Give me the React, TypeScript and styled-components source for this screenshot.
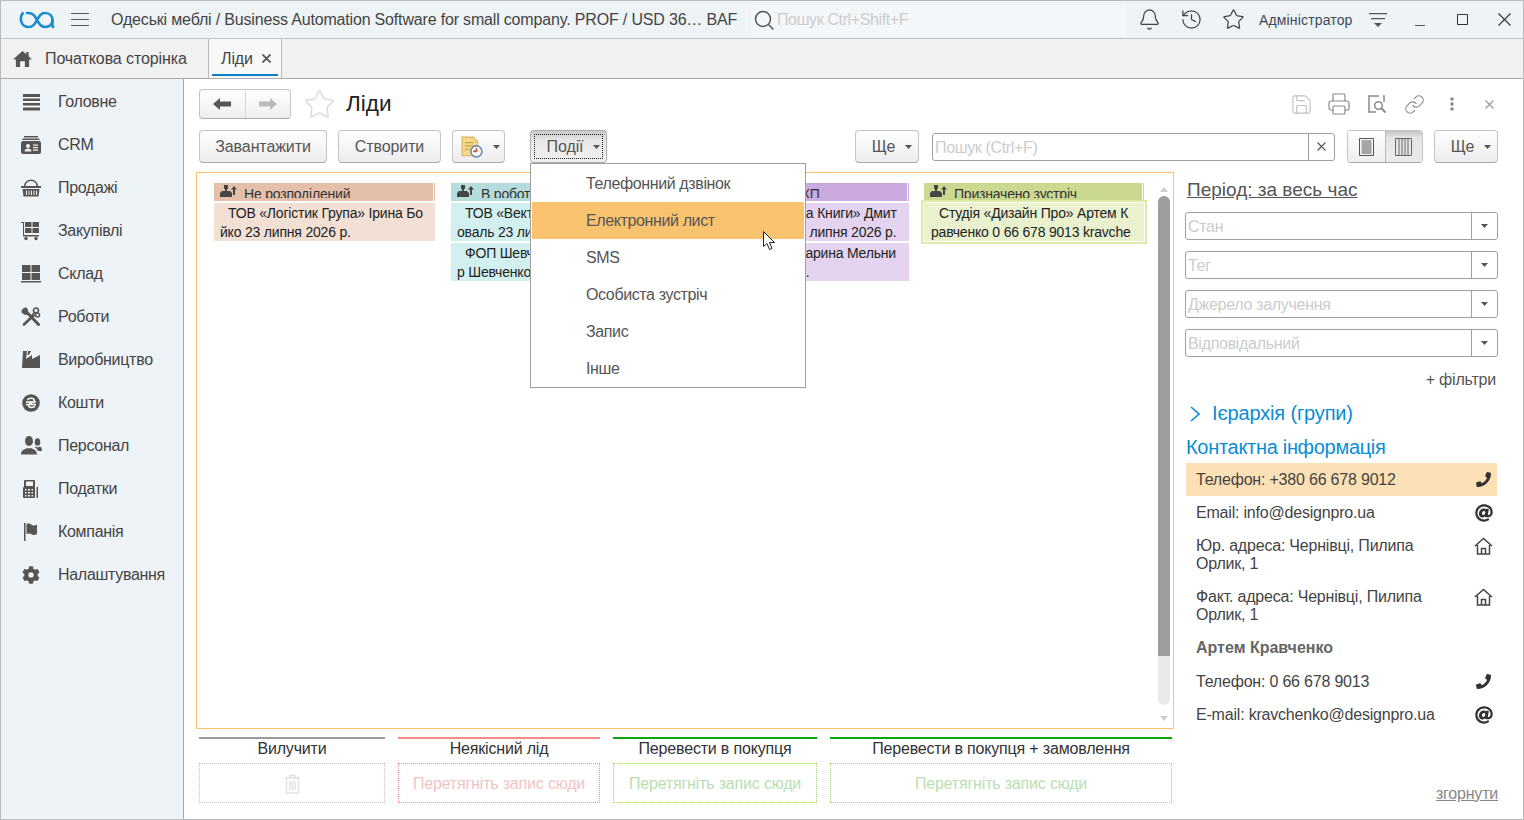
import React from "react";
import styled, { createGlobalStyle } from "styled-components";
import { Bell, History, Star, Printer, Link, Save } from "lucide-react";
import { FaPhoneAlt, FaAt, FaCog } from "react-icons/fa";

const GlobalStyle = createGlobalStyle`
  html, body { margin: 0; padding: 0; background: #fff; }
  body { font-family: "Liberation Sans", Arial, sans-serif; font-size: 16px; color: #444; overflow: hidden; }
  * { box-sizing: border-box; }
`;

const Caret = () => (
  <svg width="7" height="4" viewBox="0 0 7 4"><path d="M0 0h7L3.500 4z" fill="#555" /></svg>
);

const Logo = () => (
  <svg width="36" height="20" viewBox="0 0 36 20" fill="none" stroke="#1a8ccf" strokeWidth="2.600">
    <path d="M4.500 2.500C.5 6 .5 17 9.500 17c5 0 6.500-3.500 8.500-7 2-3.500 3.500-7 8-7 5 0 7.500 3.500 7.500 7s-2.500 7-7.500 7c-4.500 0-6-3.500-8-7-2-3.500-3.500-7-8.500-7H7" />
    <path d="M33.500 9v7.500l1.500 1" />
  </svg>
);

const HomeIcon = () => (
  <svg width="19" height="17" viewBox="0 0 20 18" fill="#555">
    <path d="M10 1l4 3.500V2h2.500v4.700L20 10h-3v8h-4.500v-6h-5v6H3v-8H0z" />
  </svg>
);

const CrmIcon = () => (
  <svg width="20" height="20" viewBox="0 0 20 20" fill="#555">
    <path d="M3 1h14v1.500H3zM1.500 3.500h17V5h-17z" />
    <path fillRule="evenodd" d="M2 6h16a2 2 0 0 1 2 2v9a2 2 0 0 1-2 2H2a2 2 0 0 1-2-2V8a2 2 0 0 1 2-2zm5 3a2 2 0 1 0 0 4 2 2 0 0 0 0-4zm-3.500 7.500h7c0-2-1.500-3-3.500-3s-3.500 1-3.500 3zM12 9.500v1.300h5V9.500zm0 2.500v1.300h5V12zm0 2.500v1.300h5v-1.300z" />
  </svg>
);

const BasketIcon = () => (
  <svg width="20" height="18" viewBox="0 0 20 18" fill="#555">
    <path d="M3 7a7 6.500 0 0 1 14 0h-1.500a5.500 5 0 0 0-11 0z" />
    <path d="M0 7h20v2H0z" />
    <path fillRule="evenodd" d="M1.500 10h17l-1 7.500h-15zM5 11.500v4.500h1v-4.500zm2.500 0v4.500h1v-4.500zm2.500 0v4.500h1v-4.500zm2.500 0v4.500h1v-4.500zm2.500 0v4.500h1v-4.500z" />
  </svg>
);

const CartIcon = () => (
  <svg width="20" height="20" viewBox="0 0 20 20" fill="#555">
    <path d="M0 1h3v13H2V2H0zM4 1h6.500v5H4zM11.500 1H18v5h-6.500zM4 7h6.500v5H4zM11.500 7H18v5h-6.500zM2 14h16v1.500H2z" />
    <circle cx="5" cy="17.500" r="1.700" /><circle cx="15" cy="17.500" r="1.700" />
  </svg>
);

const StockIcon = () => (
  <svg width="20" height="20" viewBox="0 0 20 20" fill="#555">
    <path d="M1 1h8.500v7H1zM10.500 1H19v7h-8.500zM1 9h8.500v7H1zM10.500 9H19v7h-8.500zM0 17h20v1.500H0z" />
  </svg>
);

const ToolsIcon = () => (
  <svg width="20" height="19" viewBox="0 0 20 19" fill="none" stroke="#555" strokeLinecap="round">
    <path d="M7 6.500L17.500 17.500" strokeWidth="3" />
    <path d="M5.500 1.200C3 .5.500 2.500 1 5.500c2 2 4.500 2.500 5.500 1.500S7 3.500 5.500 1.200z" fill="#555" strokeWidth="1" />
    <path d="M12 9L3 17.500" strokeWidth="2.600" />
    <circle cx="15" cy="3.500" r="2.500" strokeWidth="1.700" />
    <circle cx="16.500" cy="8" r="2" strokeWidth="1.500" />
    <path d="M13.500 5.500L11 8M14.500 8L11 9" strokeWidth="1.500" />
  </svg>
);

const FactoryIcon = () => (
  <svg width="20" height="20" viewBox="0 0 20 20" fill="#555">
    <path d="M2 1h4l-1 8 6-4v4l8-4v13H1zM7 1h3L8 5H6.500z" />
  </svg>
);

const CoinIcon = () => (
  <svg width="20" height="20" viewBox="0 0 20 20">
    <circle cx="10" cy="10" r="8.800" fill="#555" />
    <path d="M6.500 7c1-2 6-2.500 6.800 0 .5 2-4 3-5.500 4.500-1 1.500.5 3 2.700 3 1.500 0 2.800-.5 3.500-1.500M5 9h10M5 11.500h10" stroke="#fff" strokeWidth="1.500" fill="none" />
  </svg>
);

const PeopleIcon = () => (
  <svg width="21" height="19" viewBox="0 0 21 19" fill="#555">
    <ellipse cx="8" cy="5" rx="4" ry="5" />
    <path d="M0 18.500c0-4 3-5 5.500-6.200h5c2.500 1.200 5.500 2.200 5.500 6.200z" />
    <ellipse cx="16.500" cy="6" rx="2.800" ry="3.800" />
    <path d="M14 10.500l2.500 1 2.500-1c1.200.5 2 1.700 2 4.500h-4c-.5-1.500-1.500-2.500-3-3.500z" />
  </svg>
);

const TillIcon = () => (
  <svg width="20" height="20" viewBox="0 0 20 20" fill="#555">
    <path fillRule="evenodd" d="M4 1h9a1 1 0 0 1 1 1v16a1 1 0 0 1-1 1H3a1 1 0 0 1-1-1V9a1 1 0 0 1 1-1V2a1 1 0 0 1 1-1zm1 1.500V7h7V2.500zM4 10v1.500h1.500V10zm3 0v1.500h2V10zm3.500 0v1.500H12V10zM4 13v1.500h1.500V13zm3 0v1.500h2V13zm3.500 0v1.500H12V13zM4 16v1.500h1.500V16zm3 0v1.500h2V16zm3.500 0v1.500H12V16z" />
    <path d="M15.500 8H17v11h-1.500z" />
  </svg>
);

const FlagIcon = () => (
  <svg width="20" height="20" viewBox="0 0 20 20" fill="#555">
    <path d="M3 1h1.500v18H3zM5.500 2c2-1 4 0 5.500 1s3 .5 5-.5V12c-2 1-3.500 1.500-5 .5s-3.500-1.500-5.500-.5z" />
  </svg>
);

const LinesIcon = () => (
  <svg width="19" height="18" viewBox="0 0 19 18" fill="#555">
    <path d="M1 1h17v3H1zM1 5.500h17v2.500H1zM1 10h17v2.500H1zM1 14.500h17v3H1z" />
  </svg>
);

const HouseIcon = () => (
  <svg width="19" height="18" viewBox="0 0 19 18" fill="none" stroke="#444" strokeWidth="1.500">
    <path d="M1 9l8.500-7.500L18 9M3.500 8v9h12V8M7.500 17v-5.500h4V17" />
  </svg>
);

const Cursor = () => (
  <svg width="14" height="20" viewBox="0 0 14 20">
    <path d="M.5.500v15l3.500-3 2.500 6 2.500-1-2.500-6h5z" fill="#fff" stroke="#222" strokeWidth="1" />
  </svg>
);

const Trash = () => (
  <svg width="17" height="20" viewBox="0 0 17 20" fill="none" stroke="#e2e2e2" strokeWidth="1.500">
    <path d="M1 4h15M6 4V1.500h5V4M2.500 4v15h12V4M6 7v9M8.500 7v9M11 7v9" />
  </svg>
);

const EventIcon = () => (
  <svg width="22" height="22" viewBox="0 0 20 20">
    <path d="M1 1h10l4 4v13H1z" fill="#f4d98a" stroke="#d8b45c" />
    <path d="M3.500 6h8M3.500 9h8M3.500 12h5" stroke="#c9a24e" />
    <circle cx="14" cy="14" r="5" fill="#fff" stroke="#6a8fb8" strokeWidth="1.500" />
    <path d="M14 11v3h-3" stroke="#d8503c" strokeWidth="1.500" fill="none" />
  </svg>
);

const PreviewIcon = () => (
  <svg width="20" height="20" viewBox="0 0 20 20" fill="none" stroke="#8a8a8a" strokeWidth="1.500">
    <path d="M12 2H2v16h7M16 2h1v6" />
    <circle cx="11.500" cy="11.500" r="3.800" />
    <path d="M14.500 14.500l4 4" strokeWidth="2" />
  </svg>
);

const PageLinesIcon = () => (
  <svg width="15" height="18" viewBox="0 0 15 18" fill="none" stroke="#555">
    <path d="M.5.500h14v17H.5z" />
    <path d="M2.500 3h10M2.500 5h10M2.500 7h10M2.500 9h10M2.500 11h10M2.500 13h10M2.500 15h10" />
  </svg>
);

const ColumnsIcon = () => (
  <svg width="17" height="18" viewBox="0 0 17 18" fill="none" stroke="#666">
    <path d="M.5.500h16v17H.5zM4 .500v17M7 .500v17M10 .500v17M13 .500v17" />
  </svg>
);

const FilterLinesIcon = () => (
  <svg width="18" height="16" viewBox="0 0 18 16" fill="#555">
    <path d="M0 1h18v1.200H0zM2 6h14v1.200H2zM5 11h8l-4 4z" />
  </svg>
);

const navItems = [
  { label: "Головне", icon: <LinesIcon /> },
  { label: "CRM", icon: <CrmIcon /> },
  { label: "Продажі", icon: <BasketIcon /> },
  { label: "Закупівлі", icon: <CartIcon /> },
  { label: "Склад", icon: <StockIcon /> },
  { label: "Роботи", icon: <ToolsIcon /> },
  { label: "Виробництво", icon: <FactoryIcon /> },
  { label: "Кошти", icon: <CoinIcon /> },
  { label: "Персонал", icon: <PeopleIcon /> },
  { label: "Податки", icon: <TillIcon /> },
  { label: "Компанія", icon: <FlagIcon /> },
  { label: "Налаштування", icon: <FaCog size={18} color="#555" /> },
];

const columns = [
  {
    title: "Не розподілений",
    head: "#e4c0ab",
    body: "#f3e0d5",
    cards: [["ТОВ «Логістик Група» Ірина Бо", "йко 23 липня 2026 р."]],
  },
  {
    title: "В роботі",
    head: "#b5dcdc",
    body: "#d2f0f0",
    cards: [
      ["ТОВ «Вектор» Олена К", "оваль 23 липня 2026 р."],
      ["ФОП Шевченко Ігор", "р Шевченко 23 липня"],
    ],
  },
  {
    title: "Відправлено КП",
    head: "#cbaae0",
    body: "#e4d4f0",
    cards: [
      ["ТОВ «Бібліотечна Книги» Дмит", "ро Коваленько 23 липня 2026 р."],
      ["ТОВ «Світло» Марина Мельни", "к 23 липня 2026 р."],
    ],
  },
  {
    title: "Призначено зустріч",
    head: "#cbd990",
    body: "#e9f1cf",
    cards: [["Студія «Дизайн Про» Артем К", "равченко 0 66 678 9013 kravche"]],
    selected: true,
  },
];

const dropZones = [
  { title: "Вилучити", width: 186, line: "#999", edge: "#c4c4c4", color: "", text: "" },
  { title: "Неякісний лід", width: 202, line: "#f98a8a", edge: "#f98a8a", color: "#f2c4c4", text: "Перетягніть запис сюди" },
  { title: "Перевести в покупця", width: 204, line: "#0aa80a", edge: "#a6d66a", color: "#b8e0b0", text: "Перетягніть запис сюди" },
  { title: "Перевести в покупця + замовлення", width: 342, line: "#0aa80a", edge: "#a6d66a", color: "#b8e0b0", text: "Перетягніть запис сюди" },
];

const menuItems = ["Телефонний дзвінок", "Електронний лист", "SMS", "Особиста зустріч", "Запис", "Інше"];

const filters = ["Стан", "Тег", "Джерело залучення", "Відповідальний"];

export default function App() {
  return (
    <Window>
      <GlobalStyle />
      <Header>
        <LogoBox><Logo /></LogoBox>
        <Burger><i /><i /><i /></Burger>
        <AppTitle>Одеські меблі / Business Automation Software for small company. PROF / USD 36… BAF</AppTitle>
        <GlobalSearch>
          <svg width="22" height="22" viewBox="0 0 22 22" fill="none" stroke="#555" strokeWidth="1.500">
            <circle cx="10" cy="10" r="7.500" /><path d="M15.500 15.500l5 5" />
          </svg>
          <span>Пошук Ctrl+Shift+F</span>
        </GlobalSearch>
        <HeadSlot $w={46}><Bell size={23} color="#444" strokeWidth={1.300} /></HeadSlot>
        <HeadSlot $w={38}><History size={23} color="#444" strokeWidth={1.300} /></HeadSlot>
        <HeadSlot $w={46}><Star size={23} color="#444" strokeWidth={1.300} /></HeadSlot>
        <UserName>Адміністратор</UserName>
        <HeadSlot $w={50}><FilterLinesIcon /></HeadSlot>
        <HeadSlot $w={34}>
          <svg width="10" height="12" viewBox="0 0 10 12"><path d="M0 11h10v1H0z" fill="#555" /></svg>
        </HeadSlot>
        <HeadSlot $w={50}>
          <svg width="11" height="11" viewBox="0 0 11 11" fill="none" stroke="#333"><path d="M.5.500h10v10H.5z" /></svg>
        </HeadSlot>
        <HeadSlot $w={34}>
          <svg width="13" height="13" viewBox="0 0 13 13" stroke="#333" strokeWidth="1.100"><path d="M.5.500l12 12M12.500.500l-12 12" /></svg>
        </HeadSlot>
      </Header>

      <TabBar>
        <HomeTab><HomeIcon /><span>Початкова сторінка</span></HomeTab>
        <ActiveTab>
          <span>Ліди</span>
          <svg width="9" height="9" viewBox="0 0 9 9" stroke="#555" strokeWidth="1.800"><path d="M.5.500l8 8M8.500.500l-8 8" /></svg>
        </ActiveTab>
      </TabBar>

      <Workspace>
        <Sidebar>
          {navItems.map((item) => (
            <NavItem key={item.label}>
              <NavIcon>{item.icon}</NavIcon>
              <span>{item.label}</span>
            </NavItem>
          ))}
        </Sidebar>

        <Main>
          <TitleRow>
            <NavGroup>
              <NavArrow>
                <svg width="18" height="12" viewBox="0 0 18 12" fill="#555"><path d="M0 6l7-6v3.500h11v5H7V12z" /></svg>
              </NavArrow>
              <NavArrow $off>
                <svg width="18" height="12" viewBox="0 0 18 12" fill="#bbb"><path d="M18 6l-7-6v3.500H0v5h11V12z" /></svg>
              </NavArrow>
            </NavGroup>
            <TitleStar><Star size={33} color="#d5d5d5" strokeWidth={0.900} /></TitleStar>
            <PageTitle>Ліди</PageTitle>
            <TitleTools>
              <ToolSlot $w={38}><Save size={23} color="#c0c0c0" strokeWidth={1.200} /></ToolSlot>
              <ToolSlot $w={38}><Printer size={24} color="#8a8a8a" strokeWidth={1.200} /></ToolSlot>
              <ToolSlot $w={37}><PreviewIcon /></ToolSlot>
              <ToolSlot $w={38}><Link size={21} color="#8a8a8a" strokeWidth={1.300} /></ToolSlot>
              <ToolSlot $w={37}>
                <svg width="4" height="14" viewBox="0 0 4 14" fill="#888"><circle cx="2" cy="2" r="1.800" /><circle cx="2" cy="7" r="1.800" /><circle cx="2" cy="12" r="1.800" /></svg>
              </ToolSlot>
              <ToolSlot $w={38}>
                <svg width="9" height="9" viewBox="0 0 9 9" stroke="#999" strokeWidth="1.200"><path d="M.5.500l8 8M8.500.500l-8 8" /></svg>
              </ToolSlot>
            </TitleTools>
          </TitleRow>

          <CommandRow>
            <Button $w={128}>Завантажити</Button>
            <Button $w={103}>Створити</Button>
            <Button $w={53} $indent={3}><EventIcon /><Caret /></Button>
            <MenuAnchor>
              <Button $w={77} $pressed><FocusFrame>Події<Caret /></FocusFrame></Button>
              <Menu>
                {menuItems.map((item, i) => (
                  <MenuItem key={item} $active={i === 1}>{item}</MenuItem>
                ))}
                <CursorMark><Cursor /></CursorMark>
              </Menu>
            </MenuAnchor>
            <Button $w={64} $indent={10} $push>Ще<Caret /></Button>
            <SearchBox>
              <SearchText>Пошук (Ctrl+F)</SearchText>
              <SearchClear>
                <svg width="9" height="9" viewBox="0 0 9 9" stroke="#555" strokeWidth="1.100"><path d="M.5.500l8 8M8.500.500l-8 8" /></svg>
              </SearchClear>
            </SearchBox>
            <ViewToggle>
              <ToggleHalf><PageLinesIcon /></ToggleHalf>
              <ToggleHalf $on><ColumnsIcon /></ToggleHalf>
            </ViewToggle>
            <Button $w={64} $indent={10}>Ще<Caret /></Button>
          </CommandRow>

          <Body>
            <LeftPane>
              <Board>
                <Columns>
                  {columns.map((col) => (
                    <Column key={col.title}>
                      <ColumnHead $color={col.head}>
                        <ColumnLabel>
                          <svg width="18" height="13" viewBox="0 0 18 13" fill="#444">
                            <path d="M4 0h4v4H7v2h3l2 2v4H0V8l2-2h3V4H4zM14 1l3 3.500h-2V10h-2V4.500h-2z" />
                          </svg>
                          {col.title}
                        </ColumnLabel>
                      </ColumnHead>
                      {col.cards.map((lines) => (
                        <Card key={lines[0]} $color={col.body} $selected={col.selected}>
                          <CardFirst>{lines[0]}</CardFirst>
                          <div>{lines[1]}</div>
                        </Card>
                      ))}
                    </Column>
                  ))}
                </Columns>
                <Scrollbar>
                  <ScrollArrow><svg width="8" height="5" viewBox="0 0 8 5"><path d="M4 0l4 5H0z" fill="#ccc" /></svg></ScrollArrow>
                  <ScrollTrack><ScrollThumb /></ScrollTrack>
                  <ScrollArrow $down><svg width="8" height="5" viewBox="0 0 8 5"><path d="M4 5l4-5H0z" fill="#ccc" /></svg></ScrollArrow>
                </Scrollbar>
              </Board>
              <DropRow>
                {dropZones.map((zone) => (
                  <DropColumn key={zone.title} $w={zone.width}>
                    <DropTitle $line={zone.line}>{zone.title}</DropTitle>
                    <DropBox $edge={zone.edge} $color={zone.color}>
                      {zone.text || <Trash />}
                    </DropBox>
                  </DropColumn>
                ))}
              </DropRow>
            </LeftPane>

            <RightPane>
              <Period>Період: за весь час</Period>
              {filters.map((name) => (
                <Field key={name}>
                  <FieldText>{name}</FieldText>
                  <FieldButton><Caret /></FieldButton>
                </Field>
              ))}
              <MoreFilters>+ фільтри</MoreFilters>
              <Hierarchy>
                <svg width="10" height="16" viewBox="0 0 10 16" fill="none" stroke="#0a8dd4" strokeWidth="1.600"><path d="M1 1l8 7-8 7" /></svg>
                <span>Ієрархія (групи)</span>
              </Hierarchy>
              <ContactTitle>Контактна інформація</ContactTitle>
              <ContactRow $active>
                <span>Телефон: +380 66 678 9012</span>
                <ContactIcon><FaPhoneAlt size={15} color="#333" style={{ transform: "scaleX(-1)" }} /></ContactIcon>
              </ContactRow>
              <ContactRow>
                <span>Email: info@designpro.ua</span>
                <ContactIcon><FaAt size={18} color="#333" /></ContactIcon>
              </ContactRow>
              <ContactRow>
                <AddressText>Юр. адреса: Чернівці, Пилипа Орлик, 1</AddressText>
                <ContactIcon><HouseIcon /></ContactIcon>
              </ContactRow>
              <ContactRow>
                <AddressText>Факт. адреса: Чернівці, Пилипа Орлик, 1</AddressText>
                <ContactIcon><HouseIcon /></ContactIcon>
              </ContactRow>
              <NameRow><strong>Артем Кравченко</strong></NameRow>
              <ContactRow>
                <span>Телефон: 0 66 678 9013</span>
                <ContactIcon><FaPhoneAlt size={15} color="#333" style={{ transform: "scaleX(-1)" }} /></ContactIcon>
              </ContactRow>
              <ContactRow>
                <span>E-mail: kravchenko@designpro.ua</span>
                <ContactIcon><FaAt size={18} color="#333" /></ContactIcon>
              </ContactRow>
              <Collapse>згорнути</Collapse>
            </RightPane>
          </Body>
        </Main>
      </Workspace>
    </Window>
  );
}

const Window = styled.div`
  width: 1524px;
  height: 820px;
  display: flex;
  flex-direction: column;
  overflow: hidden;
  border: 1px solid #bbb;
`;

const Header = styled.header`
  height: 38px;
  flex: none;
  display: flex;
  align-items: center;
  background: #eef3f6;
  border-bottom: 1px solid #bcc2c6;
  padding-left: 18px;
`;

const LogoBox = styled.div`
  display: flex;
  width: 36px;
`;

const Burger = styled.div`
  margin-left: 16px;
  width: 18px;
  display: flex;
  flex-direction: column;
  gap: 5px;

  & i {
    display: block;
    height: 1px;
    border-top: 1.5px solid #555;
  }
`;

const AppTitle = styled.div`
  margin-left: 22px;
  width: 626px;
  white-space: nowrap;
  letter-spacing: -0.175px;
  color: #444;
`;

const GlobalSearch = styled.div`
  margin-left: 14px;
  width: 375px;
  height: 30px;
  background: #f3f7f9;
  display: flex;
  align-items: center;
  gap: 2px;
  padding-left: 2px;
  letter-spacing: -0.38px;
  color: #ccc;
`;

const HeadSlot = styled.div<{ $w: number }>`
  width: ${(p) => p.$w}px;
  flex: none;
  display: flex;
  justify-content: center;
  align-items: center;
`;

const UserName = styled.div`
  margin-left: 3px;
  width: 94px;
  font-size: 14px;
  letter-spacing: 0.15px;
  white-space: nowrap;
  color: #3c4a5c;
`;

const TabBar = styled.nav`
  height: 40px;
  flex: none;
  display: flex;
  background: #f1f1f1;
  border-bottom: 1px solid #aaa;
  letter-spacing: -0.1px;
`;

const HomeTab = styled.div`
  width: 207px;
  display: flex;
  align-items: center;
  gap: 13px;
  padding-left: 12px;
`;

const ActiveTab = styled.div`
  width: 74px;
  display: flex;
  align-items: center;
  gap: 9px;
  padding-left: 12px;
  background: #f8f8f8;
  border-left: 1px solid #bbb;
  border-right: 1px solid #bbb;
  position: relative;

  &::after {
    content: "";
    position: absolute;
    left: 3px;
    right: 3px;
    bottom: 2px;
    height: 2px;
    background: #0a7fc4;
  }
`;

const Workspace = styled.div`
  flex: 1;
  min-height: 0;
  display: flex;
`;

const Sidebar = styled.aside`
  width: 183px;
  flex: none;
  background: #eef3f7;
  border-right: 1px solid #aaa;
  padding-top: 1px;
`;

const NavItem = styled.div`
  height: 43px;
  display: flex;
  align-items: center;
  letter-spacing: -0.3px;
  color: #444;
`;

const NavIcon = styled.span`
  width: 57px;
  padding-left: 3px;
  flex: none;
  display: flex;
  justify-content: center;
`;

const Main = styled.main`
  flex: 1;
  min-width: 0;
  display: flex;
  flex-direction: column;
  padding: 10px 25px 0 12px;
`;

const TitleRow = styled.div`
  height: 30px;
  flex: none;
  display: flex;
  align-items: center;
  padding-left: 3px;
`;

const NavGroup = styled.div`
  width: 92px;
  height: 30px;
  display: flex;
  border: 1px solid #c4c4c4;
  border-bottom-color: #aaa;
  border-radius: 4px;
  background: linear-gradient(#fff, #eee);
`;

const NavArrow = styled.div<{ $off?: boolean }>`
  flex: 1;
  display: flex;
  align-items: center;
  justify-content: center;
  border-left: ${(p) => (p.$off ? "1px solid #d8d8d8" : "none")};
`;

const TitleStar = styled.div`
  margin-left: 12px;
  display: flex;
`;

const PageTitle = styled.h1`
  margin: 0 0 0 10px;
  font-size: 22.5px;
  font-weight: 400;
  color: #222;
`;

const TitleTools = styled.div`
  margin-left: auto;
  margin-right: -10px;
  display: flex;
  align-items: center;
`;

const ToolSlot = styled.div<{ $w: number }>`
  width: ${(p) => p.$w}px;
  display: flex;
  justify-content: center;
`;

const CommandRow = styled.div`
  margin-top: 11px;
  height: 33px;
  flex: none;
  display: flex;
  align-items: center;
  padding-left: 3px;
`;

const Button = styled.button<{ $w: number; $indent?: number; $pressed?: boolean; $push?: boolean }>`
  width: ${(p) => p.$w}px;
  height: 33px;
  flex: none;
  margin-right: 11px;
  margin-left: ${(p) => (p.$push ? "auto" : "0")};
  padding: 0 0 0 ${(p) => p.$indent ?? 0}px;
  display: flex;
  align-items: center;
  justify-content: center;
  gap: 10px;
  font: inherit;
  letter-spacing: -0.1px;
  color: #555;
  border: 1px solid ${(p) => (p.$pressed ? "#b0b0b0" : "#c4c4c4")};
  border-bottom-color: #aaa;
  border-radius: 4px;
  background: ${(p) => (p.$pressed ? "linear-gradient(#c8c8c8, #e8e8e8 30%, #f0f0f0)" : "linear-gradient(#fff, #ececec)")};

  &:last-child {
    margin-right: 0;
  }
`;

const MenuAnchor = styled.div`
  position: relative;
  margin-left: 14px;
`;

const FocusFrame = styled.span`
  width: 69px;
  height: 25px;
  display: flex;
  align-items: center;
  justify-content: center;
  gap: 10px;
  padding-left: 10px;
  border: 1px dotted #222;
`;

const Menu = styled.div`
  position: absolute;
  z-index: 5;
  top: 33px;
  left: 0;
  width: 276px;
  height: 225px;
  padding: 1px;
  background: #fff;
  border: 1px solid #a0a0a0;
`;

const MenuItem = styled.div<{ $active?: boolean }>`
  height: 37px;
  display: flex;
  align-items: center;
  padding-left: 54px;
  letter-spacing: -0.38px;
  color: #555;
  background: ${(p) => (p.$active ? "#f9c370" : "transparent")};
`;

const CursorMark = styled.span`
  position: absolute;
  left: 232px;
  top: 67px;
  display: flex;
`;

const SearchBox = styled.div`
  margin-left: 2px;
  margin-right: 12px;
  width: 403px;
  height: 28px;
  display: flex;
  border: 1px solid #a0a0a0;
  border-radius: 3px;
`;

const SearchText = styled.div`
  flex: 1;
  padding-left: 2px;
  letter-spacing: -0.35px;
  line-height: 27px;
  color: #ccc;
`;

const SearchClear = styled.div`
  width: 26px;
  display: flex;
  align-items: center;
  justify-content: center;
  border-left: 1px solid #a0a0a0;
`;

const ViewToggle = styled.div`
  width: 76px;
  height: 33px;
  flex: none;
  margin-right: 11px;
  display: flex;
  border: 1px solid #c4c4c4;
  border-bottom-color: #aaa;
  border-radius: 4px;
  overflow: hidden;
`;

const ToggleHalf = styled.div<{ $on?: boolean }>`
  flex: 1;
  display: flex;
  align-items: center;
  justify-content: center;
  background: ${(p) => (p.$on ? "linear-gradient(#c4c4c4, #e4e4e4 20%, #ebebeb)" : "linear-gradient(#fff, #eee)")};
  border-left: ${(p) => (p.$on ? "1px solid #bbb" : "none")};
`;

const Body = styled.div`
  flex: 1;
  min-height: 0;
  margin-top: 9px;
  display: flex;
`;

const LeftPane = styled.div`
  width: 978px;
  flex: none;
  display: flex;
  flex-direction: column;
`;

const Board = styled.section`
  height: 557px;
  flex: none;
  display: flex;
  border: 1px solid #f9c36e;
  padding: 10px 3px 4px 17px;
`;

const Columns = styled.div`
  flex: 1;
  display: flex;
  gap: 16px;
  align-items: flex-start;
`;

const Column = styled.div`
  width: 221px;
  flex: none;
  display: flex;
  flex-direction: column;
  gap: 2px;

  &:last-child {
    width: 220px;
    margin-left: -1px;
  }
`;

const ColumnHead = styled.div<{ $color: string }>`
  height: 18px;
  background: ${(p) => p.$color};
  background-clip: content-box;
  padding-right: 1px;
  border-right: 1px solid ${(p) => p.$color};
`;

const ColumnLabel = styled.div`
  height: 15px;
  overflow: hidden;
  display: flex;
  align-items: flex-start;
  gap: 6px;
  padding-left: 6px;
  font-size: 14px;
  letter-spacing: -0.2px;
  line-height: 23px;
  color: #333;
  white-space: nowrap;

  & svg {
    flex: none;
    margin-top: 2px;
  }
`;

const Card = styled.div<{ $color: string; $selected?: boolean }>`
  height: 38px;
  padding: 1px 0 0 ${(p) => (p.$selected ? 7 : 6)}px;
  font-size: 14px;
  letter-spacing: -0.2px;
  line-height: 19px;
  white-space: nowrap;
  overflow: hidden;
  color: #222;
  background: ${(p) => p.$color};
  box-shadow: ${(p) => (p.$selected ? "0 0 0 1px #fff, 0 0 0 3px #dceba8" : "none")};
`;

const CardFirst = styled.div`
  text-indent: 8px;
`;

const Scrollbar = styled.div`
  width: 12px;
  flex: none;
  display: flex;
  flex-direction: column;
  align-items: center;
`;

const ScrollArrow = styled.div<{ $down?: boolean }>`
  height: 13px;
  flex: none;
  display: flex;
  justify-content: center;
  align-items: center;
  margin-top: ${(p) => (p.$down ? "7px" : "0")};
`;

const ScrollTrack = styled.div`
  width: 100%;
  height: 509px;
  flex: none;
  background: #e9e9e9;
  border-radius: 6px;
`;

const ScrollThumb = styled.div`
  height: 460px;
  background: #9e9e9e;
  border-radius: 6px 6px 0 0;
`;

const DropRow = styled.div`
  margin-top: 8px;
  padding-left: 3px;
  display: flex;
  gap: 13px;
`;

const DropColumn = styled.div<{ $w: number }>`
  width: ${(p) => p.$w}px;
  flex: none;
  letter-spacing: -0.18px;
`;

const DropTitle = styled.div<{ $line: string }>`
  height: 26px;
  border-top: 2px solid ${(p) => p.$line};
  text-align: center;
  line-height: 20px;
  color: #333;
`;

const DropBox = styled.div<{ $edge: string; $color: string }>`
  height: 40px;
  padding-top: 1px;
  display: flex;
  align-items: center;
  justify-content: center;
  border: 1px dotted ${(p) => p.$edge};
  color: ${(p) => p.$color};
`;

const RightPane = styled.aside`
  flex: 1;
  margin-left: 11px;
  padding-bottom: 16px;
  display: flex;
  flex-direction: column;
`;

const Period = styled.div`
  font-size: 19px;
  line-height: 21px;
  padding: 7px 0 0 2px;
  margin-bottom: 12px;
  color: #555;
  text-decoration: underline;
`;

const Field = styled.div`
  height: 28px;
  flex: none;
  margin-bottom: 11px;
  display: flex;
  border: 1px solid #a0a0a0;
  border-radius: 3px;
`;

const FieldText = styled.div`
  flex: 1;
  padding-left: 2px;
  letter-spacing: -0.3px;
  line-height: 27px;
  color: #ccc;
`;

const FieldButton = styled.div`
  width: 26px;
  display: flex;
  align-items: center;
  justify-content: center;
  border-left: 1px solid #a0a0a0;
`;

const MoreFilters = styled.div`
  margin-top: 1px;
  text-align: right;
  padding-right: 2px;
  letter-spacing: -0.2px;
  line-height: 22px;
  color: #555;
`;

const Hierarchy = styled.div`
  margin-top: 11px;
  display: flex;
  align-items: center;
  gap: 12px;
  padding-left: 5px;
  font-size: 20px;
  letter-spacing: -0.15px;
  line-height: 23px;
  color: #0a8dd4;
`;

const ContactTitle = styled.div`
  margin-top: 11px;
  margin-bottom: 4px;
  padding-left: 1px;
  font-size: 20px;
  letter-spacing: -0.3px;
  line-height: 23px;
  color: #0a8dd4;
`;

const ContactRow = styled.div<{ $active?: boolean }>`
  margin: 0 1px;
  display: flex;
  justify-content: space-between;
  padding: 7.5px 4px 7.5px 10px;
  letter-spacing: -0.2px;
  line-height: 18px;
  color: #444;
  background: ${(p) => (p.$active ? "#fce0b6" : "transparent")};
`;

const NameRow = styled(ContactRow)`
  padding-bottom: 8.5px;
  letter-spacing: 0;

  & strong {
    color: #666;
  }
`;

const ContactIcon = styled.span`
  width: 19px;
  height: 18px;
  display: flex;
  align-items: center;
  justify-content: center;
`;

const AddressText = styled.span`
  width: 240px;
`;

const Collapse = styled.div`
  margin-top: auto;
  text-align: right;
  letter-spacing: -0.2px;
  color: #888;
  text-decoration: underline;
`;
